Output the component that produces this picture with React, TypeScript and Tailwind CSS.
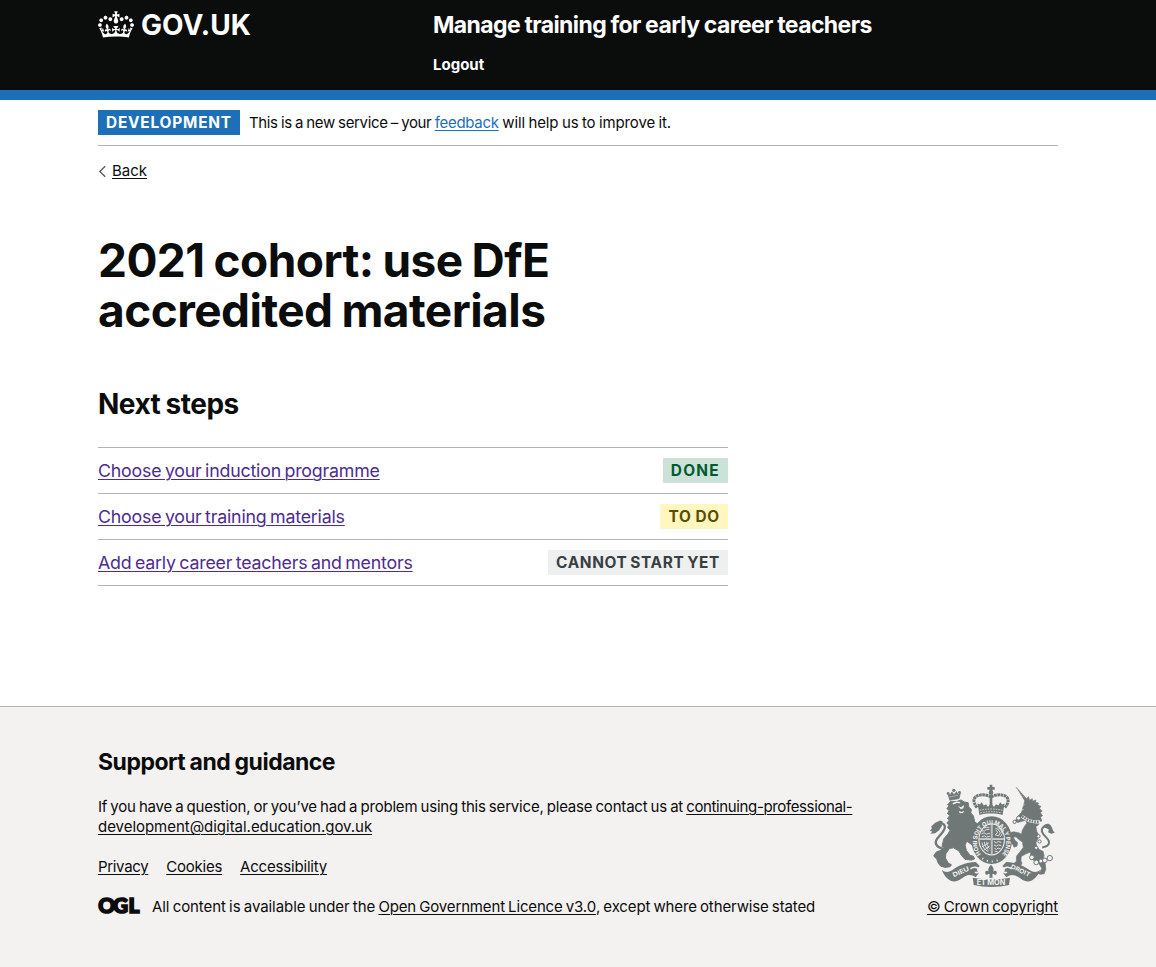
import type { ReactNode } from 'react';

function Crown() {
  return (
    <svg viewBox="0 0 132 97" className="-mt-px h-[27px] w-9 shrink-0" fill="currentColor" aria-hidden="true">
      <path d="M25 30.2c3.5 1.5 7.7-.2 9.1-3.7 1.5-3.6-.2-7.8-3.9-9.2-3.6-1.4-7.6.3-9.1 3.9-1.4 3.5.3 7.5 3.9 9zM9 39.5c3.6 1.5 7.8-.2 9.2-3.7 1.5-3.6-.2-7.8-3.9-9.1-3.6-1.5-7.6.2-9.1 3.8-1.4 3.5.3 7.5 3.8 9zM4.4 57.2c3.5 1.5 7.7-.2 9.1-3.8 1.5-3.6-.2-7.7-3.9-9.1-3.5-1.5-7.6.3-9.1 3.8-1.4 3.5.3 7.6 3.9 9.1zm38.3-21.4c3.5 1.5 7.7-.2 9.1-3.8 1.5-3.6-.2-7.7-3.9-9.1-3.6-1.5-7.6.3-9.1 3.8-1.3 3.6.4 7.7 3.9 9.1zm64.4-5.6c-3.6 1.5-7.8-.2-9.1-3.7-1.5-3.6.2-7.8 3.8-9.2 3.6-1.4 7.7.3 9.2 3.9 1.3 3.5-.4 7.5-3.9 9zm15.9 9.3c-3.6 1.5-7.7-.2-9.1-3.7-1.5-3.6.2-7.8 3.7-9.1 3.6-1.5 7.7.2 9.2 3.8 1.5 3.5-.3 7.5-3.8 9zm4.7 17.7c-3.6 1.5-7.8-.2-9.2-3.8-1.5-3.6.2-7.7 3.9-9.1 3.6-1.5 7.7.3 9.2 3.8 1.3 3.5-.4 7.6-3.9 9.1zM89.3 35.8c-3.6 1.5-7.8-.2-9.2-3.8-1.4-3.6.2-7.7 3.9-9.1 3.6-1.5 7.7.3 9.2 3.8 1.4 3.6-.3 7.7-3.9 9.1zM69.7 17.7l8.9 4.7V9.3l-8.9 2.8c-.2-.3-.5-.6-.9-.9L72.4 0H59.6l3.5 11.2c-.3.3-.6.5-.9.9l-8.8-2.8v13.1l8.8-4.7c.3.3.6.7.9.9l-5 15.4v.1c-.2.8-.4 1.6-.4 2.4 0 4.1 3.1 7.5 7 8.1h.2c.3 0 .7.1 1 .1.4 0 .7 0 1-.1h.2c4-.6 7.1-4.1 7.1-8.1 0-.8-.1-1.7-.4-2.4V34l-5.1-15.4c.4-.2.7-.6 1-.9zM66 92.8c16.9 0 32.8 1.1 47.1 3.2 4-16.9 8.9-26.7 14-33.5l-9.6-3.4c1 4.9 1.1 7.2 0 10.2-1.5-1.4-3-4.3-4.2-8.7L108.6 76c2.8-2 5-3.2 7.5-3.3-4.4 9.4-10 11.9-13.6 11.2-4.3-.8-6.3-4.6-5.6-7.9 1-4.7 5.7-5.9 8-.5 4.3-8.7-3-11.4-7.6-8.8 7.1-7.2 7.9-13.5 2.1-21.1-8 6.1-8.1 12.3-4.5 20.8-4.7-5.4-12.1-2.5-9.5 6.2 3.4-5.2 7.9-2 7.2 3.1-.6 4.3-6.4 7.8-13.5 7.2-10.3-.9-10.9-8-11.2-13.8 2.5-.5 7.1 1.8 11 7.3L80.2 60c-4.1 4.4-8 5.3-12.3 5.4 1.4-4.4 8-11.6 8-11.6H55.5s6.4 7.2 7.9 11.6c-4.2-.1-8-1-12.3-5.4l1.4 16.4c3.9-5.5 8.5-7.7 10.9-7.3-.3 5.8-.9 12.8-11.1 13.8-7.2.6-12.9-2.9-13.5-7.2-.7-5 3.8-8.3 7.1-3.1 2.7-8.7-4.6-11.6-9.4-6.2 3.7-8.5 3.6-14.7-4.6-20.8-5.8 7.6-5 13.9 2.2 21.1-4.7-2.6-11.9.1-7.7 8.8 2.3-5.5 7.1-4.2 8.1.5.7 3.3-1.3 7.1-5.7 7.9-3.5.7-9-1.8-13.5-11.2 2.5.1 4.7 1.3 7.5 3.3l-4.7-15.4c-1.2 4.4-2.7 7.2-4.3 8.7-1.1-3-.9-5.3 0-10.2l-9.5 3.4c5 6.9 9.9 16.7 14 33.5 14.8-2.1 30.8-3.2 47.7-3.2z" />
    </svg>
  );
}

const INK = '#6f7777';
const PAPER = '#f3f2f1';

function CoatOfArms() {
  return (
    <svg viewBox="45 27 375 310" className="h-[103px] w-[125px]" fill={INK} aria-hidden="true">
      {/* royal crown */}
      <path d="M224 29h8v7h7v8h-7v5h-8v-5h-7v-8h7z" />
      <circle cx="228" cy="53" r="7" />
      <path d="M186 98C168 76 178 62 196 60 208 58 220 62 228 66 236 62 248 58 260 60 278 62 288 76 270 98" fill="none" stroke={INK} strokeWidth="9" strokeDasharray="8 1.5" />
      <path d="M224 60h8v40h-8z" />
      <path d="M190 100l-3-14 8 3 5-7 6 10 7-4 6 8 9-12 9 12 6-8 7 4 6-10 5 7 8-3-3 14-3 20c-22-6-48-6-70 0z" />
      <path d="M194 106c22-5 46-5 68 0M196 114c22-5 42-5 64 0" fill="none" stroke={PAPER} strokeWidth="2" strokeDasharray="5 3" />

      {/* lion */}
      <path d="M97 54l8 6 5-9 7 8 7-9 5 8 7-5-4 18-28 5z" stroke={INK} strokeWidth="2" />
      <circle cx="116" cy="46" r="5" />
      <circle cx="99" cy="55" r="4" />
      <circle cx="133" cy="52" r="4" />
      <path d="M103 66l26-5" stroke={PAPER} strokeWidth="2" strokeDasharray="4 2" />
      <path stroke={INK} strokeWidth="3" d="M106 80l-8 9 4 4-7 8 7 6-5 9 7 6-7 9 6 4-8 10 7 5-5 8 8 8-7 12-12 14-4 16-3 18-16 6-7 11 3 5 5 3 5 14 7 9 13 4 16-2 4-6-10-5-8-15 1-13 11-16 12-2 17 10 7 13 11 12 20 2 9-4-5-8-9-2-11-15-4-16 5-12 13 9 8 8 12 3 8-8-6-13-7-9-6-20 12-8 4-10-14-10-4-18-8-9 2-10-8-8-2-13-12-2-9-6-14 5z" />
      <path d="M112 84l12-4 12 1-2 4-9-1-11 5zM129 93l9 4 9-7-2 10-8 3zM131 108l9 3 7-4-3 7-10 1z" fill={PAPER} />
      <path d="M84 221c-20-2-28-16-17-31 8-10 25-24 22-36-3-10-12-11-20-5" fill="none" stroke={INK} strokeWidth="7" />
      <path d="M86 219c-14-4-20-14-12-25 8-12 24-24 20-42" fill="none" stroke={PAPER} strokeWidth="1" />
      <path d="M75 137l8 3-5 6 3 6-9 14-12 9-15 2 7-7-8-2 6-7-2-6 12-11z" />

      {/* unicorn */}
      <path d="M303 36l36 39-8 5z" stroke={INK} />
      <path d="M306 42l29 34" stroke={PAPER} strokeWidth="1.5" strokeDasharray="2 5" />
      <path stroke={INK} strokeWidth="2" d="M330 77l11-12 3 12 8-6 1 8 10-4-1 8 9 1-2 7 9 3-4 7 8 7-6 5 7 9-6 5 4 11-7 2-3 10-8 5 3 16 5 8-2 13-6 12 4 13 8 8 10 5 3 14-5 10 8 12 2 17-5 14-12 2-8-4 8-5 5-9-7-12-14-7-12-16-2-14-14 6-13 7-1 12 3 9-4 7-13-2-8-5 8-5 1-17 12-15 8-11-2-16-10-7-10-9-8 1 5 9 8 8-2 10-9 3-3-8-10-8-8-18 4-8 16-4 15 3 9 4 2-11 7-13 7-9-4-9-13 4-12 3-5-7 7-12 11-12z" />
      <path d="M322 92l7-3M316 106l10-2" stroke={PAPER} strokeWidth="2" />
      <path d="M321 124c16 13 35 19 54 16" fill="none" stroke={PAPER} strokeWidth="10" />
      <path d="M322 124c16 13 35 19 52 16" fill="none" stroke={INK} strokeWidth="7" strokeDasharray="5 3" />
      <g fill={PAPER} stroke={INK} strokeWidth="3">
        <circle cx="311" cy="130" r="6" />
        <circle cx="299" cy="141" r="5" />
        <circle cx="371" cy="184" r="5" />
        <circle cx="374" cy="200" r="5" />
        <circle cx="364" cy="219" r="5" />
        <circle cx="351" cy="248" r="7" />
        <circle cx="364" cy="263" r="7" />
        <circle cx="378" cy="259" r="6" />
        <circle cx="390" cy="257" r="7" />
        <circle cx="405" cy="250" r="8" />
      </g>
      <path d="M382 218c22-4 26-16 14-28-14-14-20-24-11-33 9-9 22-5 23 7" fill="none" stroke={INK} strokeWidth="6" />
      <path d="M384 157c4-10 17-14 24-5 6 8 5 16 12 22l-11 3-9-5 2-8-7-4z" />

      {/* garter and shield */}
      <ellipse cx="230" cy="196" rx="61" ry="72" />
      <ellipse cx="230" cy="194" rx="40" ry="48" fill={PAPER} />
      <ellipse cx="230" cy="194" rx="37" ry="45" />
      <path d="M230 149v90M193 193h74" stroke={PAPER} strokeWidth="5" />
      <path d="M230 149v90M193 193h74" stroke={INK} strokeWidth="1.5" />
      <g fill="none" stroke={PAPER} strokeWidth="2.5">
        <path d="M200 168h9l5-4h9M199 177l8-3 7 4 11-3M200 186l8-3 6 4 11-3M207 160l7-3 9 2" />
        <path d="M237 200l7 4 6-4 9 3M237 210l7 4 6-4 9 3M238 220l6 4 5-4 8 2M239 229l9 2" />
        <path d="M241 160l9 4 6 10-5 9-10-3 7-8-6-7M247 157l10 7 5 12-6 10" />
        <path d="M201 203c1 14 8 23 19 27M208 201c0 10 6 20 13 25M215 201c0 8 3 14 8 20M201 216l21-12M207 226l17-12" />
      </g>
      <path id="garter" d="M198 238A44 53 0 1 1 262 238" fill="none" />
      <text fill={PAPER} fontSize="18" fontWeight="700" fontFamily="Inter, sans-serif">
        <textPath href="#garter" textLength="232" lengthAdjust="spacingAndGlyphs">HONI SOIT QUI MAL Y PENSE</textPath>
      </text>
      <path d="M202 251c18 12 38 12 56 0" fill="none" stroke={PAPER} strokeWidth="6" strokeDasharray="3 12" />

      {/* motto ribbon */}
      <path d="M80 286c10 8 20 8 32 0 20-14 38-22 70-24l12 12c-10 8-10 14-2 20l-10 14c-18-14-30-6-46 6-20 13-42 6-56-28z" />
      <path d="M376 286c-10 8-20 8-32 0-20-14-38-22-70-24l-12 12c10 8 10 14 2 20l10 14c18-14 30-6 46 6 20 13 42 6 56-28z" />
      <path d="M166 282c12-8 24-4 26 4 1 8-8 9-12 6M290 282c-12-8-24-4-26 4-1 8 8 9 12 6" fill="none" stroke={PAPER} strokeWidth="5" />
      <path d="M173 309c34 7 78 7 112 0l-3 22c-32 8-74 8-106 0z" />
      <g fill={PAPER} fontFamily="Inter, sans-serif" fontWeight="700">
        <text x="0" y="0" fontSize="19" textLength="52" lengthAdjust="spacingAndGlyphs" transform="translate(116 308) rotate(-24)">DIEU</text>
        <text x="185" y="331" fontSize="21" textLength="86" lengthAdjust="spacingAndGlyphs">ET MON</text>
        <text x="0" y="0" fontSize="18" textLength="62" lengthAdjust="spacingAndGlyphs" transform="translate(286 280) rotate(25)">DROIT</text>
      </g>
      {/* fleur-de-lis */}
      <path d="M228 270c10 10 10 18 4 24 6-10 16-6 13 3-2 5-8 4-8 0l-5 2 1 10h-10l1-10-5-2c0 4-6 5-8 0-3-9 7-13 13-3-6-6-6-14 4-24z" />
    </svg>
  );
}

function OpenGovernmentLogo() {
  return (
    <svg viewBox="0 0 41 18" className="-mt-[3px] h-[18px] w-[41px] shrink-0 overflow-visible" aria-label="Open Government Licence">
      <text x="0.2 14.9 30.6" y="16.2" fontFamily="Lato, sans-serif" fontSize="20.8" fontWeight="900" stroke="#0b0c0c" strokeWidth="1.7" fill="#0b0c0c">
        OGL
      </text>
    </svg>
  );
}

function Link({ className = '', children }: { className?: string; children: ReactNode }) {
  return (
    <a href="#" className={`underline decoration-1 underline-offset-[1.5px] ${className}`}>
      {children}
    </a>
  );
}

const tagBase = 'flex h-[25px] items-center px-2 text-[15.4px] font-bold whitespace-nowrap';

const steps = [
  { label: 'Choose your induction programme', status: 'DONE', tone: 'bg-[#cce2d8] text-[#005a30] tracking-[1.3px]' },
  { label: 'Choose your training materials', status: 'TO DO', tone: 'bg-[#fff7bf] text-[#594d00] tracking-[0.8px] [word-spacing:-0.75px]' },
  { label: 'Add early career teachers and mentors', status: 'CANNOT START YET', tone: 'bg-[#eeefef] text-[#383f43] tracking-[0.62px] [word-spacing:-1.3px]' },
];

export default function App() {
  return (
    <div className="flex min-h-[967px] flex-col bg-white font-['Inter',sans-serif] text-[15px] leading-5 tracking-[-0.19px] text-[#0b0c0c] [word-spacing:-0.9px]">
      <header className="h-[100px] border-b-10 border-[#1d70b8] bg-[#0b0c0c] text-white">
        <div className="mx-auto flex w-[960px]">
          <a href="#" className="flex h-[50px] w-[335px] items-center gap-[7px]">
            <Crown />
            <span className="text-[28px] font-bold leading-none tracking-[0.05px]">GOV.UK</span>
          </a>
          <div className="flex flex-col pt-[10px]">
            <a href="#" className="text-[23px] font-bold leading-[30px] tracking-[-0.6px] [word-spacing:-0.5px]">
              Manage training for early career teachers
            </a>
            <a href="#" className="mt-[15px] font-bold tracking-[0px]">Logout</a>
          </div>
        </div>
      </header>

      <div className="mx-auto w-[960px]">
        <div className="flex h-[46px] items-center gap-[10px] border-b border-[#b1b4b6]">
          <strong className={`${tagBase} w-[142px] bg-[#1d70b8] tracking-[0.8px] text-white`}>DEVELOPMENT</strong>
          <p className="-ml-px pt-px whitespace-pre">
            <span className="tracking-[-0.36px] [word-spacing:-0.6px]">This is a new service – your </span>
            <Link className="tracking-[-0.29px] text-[#1d70b8]">feedback</Link>
            <span className="tracking-[-0.14px] [word-spacing:-0.5px]"> will help us to improve it.</span>
          </p>
        </div>

        <div className="mt-[15px] flex h-5 items-center gap-[5px]">
          <svg viewBox="0 0 9 13" className="h-[13px] w-[9px]" fill="none" stroke="#505a5f" strokeWidth="1.3" aria-hidden="true">
            <path d="M7.2 1.2 1.8 6.5 7.2 11.8" />
          </svg>
          <Link className="tracking-[-0.02px]">Back</Link>
        </div>

        <main className="w-[630px]">
          <h1 className="mt-[54px] text-[46px] font-bold leading-[50px] tracking-[-0.56px] [word-spacing:-1.4px]">
            2021 cohort: use DfE<br />accredited materials
          </h1>
          <h2 className="mt-[54px] text-[28px] font-bold leading-[30px] tracking-[-0.5px]">Next steps</h2>
          <ul className="mt-[28px] border-t border-[#b1b4b6]">
            {steps.map((step) => (
              <li key={step.label} className="flex h-[46px] items-center justify-between border-b border-[#b1b4b6]">
                <Link className="text-[17.8px] leading-[25px] tracking-[-0.2px] text-[#4c2c92] [word-spacing:-1.3px]">{step.label}</Link>
                <strong className={`${tagBase} ${step.tone}`}>{step.status}</strong>
              </li>
            ))}
          </ul>
        </main>
      </div>

      <footer className="mt-[120px] flex-1 border-t border-[#b1b4b6] bg-[#f3f2f1]">
        <div className="mx-auto flex w-[960px] justify-between pt-10">
          <div className="flex flex-col whitespace-nowrap">
            <h2 className="text-[23px] font-bold leading-[30px] tracking-[-0.5px] [word-spacing:-0.6px]">Support and guidance</h2>
            <p className="mt-5 tracking-[-0.19px] [word-spacing:-0.9px]">
              If you have a question, or you’ve had a problem using this service, please contact us at{' '}
              <Link className="tracking-[-0.37px]">continuing-professional-</Link>
              <br />
              <Link className="tracking-[-0.03px]">development@digital.education.gov.uk</Link>
            </p>
            <nav className="mt-5 flex gap-[18px]">
              <Link className="tracking-[-0.33px]">Privacy</Link>
              <Link className="tracking-[-0.24px]">Cookies</Link>
              <Link className="tracking-[-0.19px]">Accessibility</Link>
            </nav>
            <div className="mt-5 flex items-center gap-[13px]">
              <OpenGovernmentLogo />
              <p className="whitespace-pre tracking-[-0.07px]">
                All content is available under the <Link className="tracking-[-0.15px]">Open Government Licence v3.0</Link>
                <span className="tracking-[-0.13px]">, except where otherwise stated</span>
              </p>
            </div>
          </div>
          <div className="flex flex-col items-end pt-[37px]">
            <div className="pr-[3px]">
              <CoatOfArms />
            </div>
            <Link className="mt-[10px] tracking-[-0.18px]">© Crown copyright</Link>
          </div>
        </div>
      </footer>
    </div>
  );
}
